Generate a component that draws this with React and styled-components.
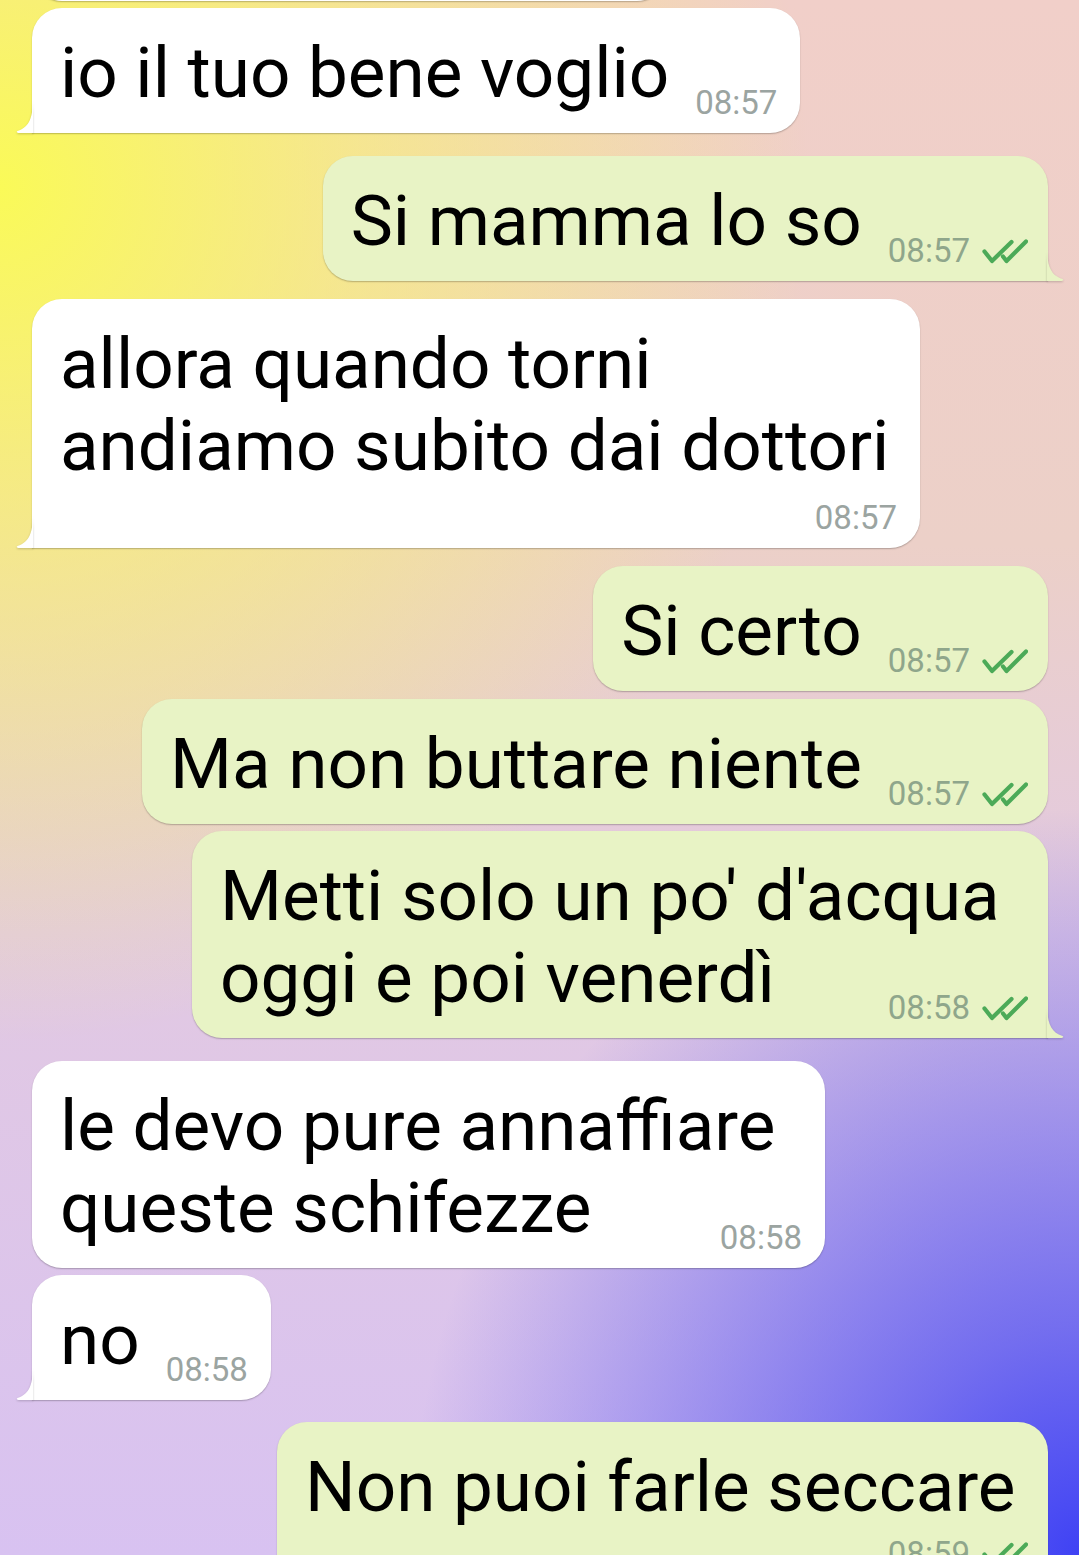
import React from "react";
import styled, { createGlobalStyle, css } from "styled-components";

const GlobalStyle = createGlobalStyle`
  html, body {
    margin: 0;
    padding: 0;
    height: 1555px;
    overflow: hidden;
  }
  body {
    font-family: Roboto, "Noto Sans", sans-serif;
  }
`;

const Screen = styled.main`
  width: 1079px;
  height: 1555px;
  overflow: hidden;
  background:
    radial-gradient(ellipse 75% 55% at 0% 12%, rgba(250, 250, 88, 1) 0%, rgba(250, 248, 100, 0.55) 45%, rgba(250, 248, 100, 0) 100%),
    radial-gradient(ellipse 62% 48% at 100% 100%, #3f42f4 0%, rgba(80, 80, 240, 0.75) 30%, rgba(120, 110, 235, 0) 100%),
    linear-gradient(180deg, #f1cfc9 0%, #ecd0c8 35%, #e2c9e2 60%, #d8c2f1 100%);
`;

const List = styled.div`
  display: flex;
  flex-direction: column;
`;

const Row = styled.div`
  display: flex;
  justify-content: ${({ $out }) => ($out ? "flex-end" : "flex-start")};
  padding: 0 31px 0 32px;
  margin-top: ${({ $mt }) => $mt}px;
`;

const Peek = styled.div`
  width: 635px;
  height: 40px;
  margin-top: -39px;
  background: #fff;
  border-radius: 0 0 30px 30px;
  box-shadow: 0 1px 1.5px rgba(0, 0, 0, 0.25);
`;

const Bubble = styled.div`
  position: relative;
  display: flow-root;
  box-sizing: border-box;
  min-width: ${({ $minWidth }) => ($minWidth ? `${$minWidth}px` : "0")};
  padding: 24px 23px 11px 28px;
  border-radius: 30px;
  background: ${({ $out }) => ($out ? "#e8f3c5" : "#ffffff")};
  box-shadow: 0 1px 1.5px rgba(0, 0, 0, 0.25);
  ${({ $out }) =>
    $out &&
    css`
      padding-right: 20px;
    `}
  ${({ $tail, $out }) =>
    $tail &&
    ($out
      ? css`
          border-bottom-right-radius: 0;
        `
      : css`
          border-bottom-left-radius: 0;
        `)}
`;

const Tail = styled.svg`
  position: absolute;
  bottom: 0;
  width: 17px;
  height: 36px;
  filter: drop-shadow(0 1px 0.8px rgba(0, 0, 0, 0.2));
  ${({ $out }) =>
    $out
      ? css`
          right: -16px;
          transform: scaleX(-1);
        `
      : css`
          left: -16px;
        `}
`;

const Text = styled.span`
  font-size: 71px;
  line-height: 82px;
  color: #000;
  white-space: nowrap;
`;

const Meta = styled.span`
  display: inline-flex;
  align-items: center;
  gap: 12px;
  font-size: 33px;
  line-height: 39px;
  color: ${({ $out }) => ($out ? "#8fa68b" : "#9ba4a1")};
  ${({ $stacked, $mt }) =>
    $stacked
      ? css`
          display: flex;
          justify-content: flex-end;
          margin-top: ${$mt ?? 11}px;
        `
      : css`
          float: right;
          margin: 51px 0 0 26px;
        `}
`;

const Ticks = () => (
  <svg width="46" height="26" viewBox="0 0 46 26" fill="none">
    <path
      d="M2.5 13.5 L10 23 L29.5 4 M21 18.5 L24.5 23 L44 3.5"
      stroke="#4caa58"
      strokeWidth="4.2"
      strokeLinecap="round"
      strokeLinejoin="round"
    />
  </svg>
);

const messages = [
  { out: false, mt: 7, lines: ["io il tuo bene voglio"], time: "08:57", tail: true },
  { out: true, mt: 23, lines: ["Si mamma lo so"], time: "08:57", tail: true },
  {
    out: false,
    mt: 18,
    lines: ["allora quando torni", "andiamo subito dai dottori"],
    time: "08:57",
    tail: true,
    stacked: true,
    minWidth: 888,
  },
  { out: true, mt: 18, lines: ["Si certo"], time: "08:57" },
  { out: true, mt: 8, lines: ["Ma non buttare niente"], time: "08:57" },
  {
    out: true,
    mt: 7,
    lines: ["Metti solo un po' d'acqua", "oggi e poi venerdì"],
    time: "08:58",
    tail: true,
    minWidth: 856,
  },
  {
    out: false,
    mt: 23,
    lines: ["le devo pure annaffiare", "queste schifezze"],
    time: "08:58",
    minWidth: 793,
  },
  { out: false, mt: 7, lines: ["no"], time: "08:58", tail: true },
  {
    out: true,
    mt: 22,
    lines: ["Non puoi farle seccare"],
    time: "08:59",
    stacked: true,
    metaMt: 6,
    minWidth: 771,
  },
];

const Message = ({ out, mt, lines, time, tail, stacked, metaMt, minWidth }) => (
  <Row $out={out} $mt={mt}>
    <Bubble $out={out} $tail={tail} $minWidth={minWidth}>
      {tail && (
        <Tail $out={out} viewBox="0 0 17 36">
          <path
            d="M17 0 C17 20 14 30 1.5 34 Q -0.5 35.4 2.5 36 L17 36 Z"
            fill={out ? "#e8f3c5" : "#ffffff"}
          />
        </Tail>
      )}
      <Text>
        {lines.map((line, i) => (
          <React.Fragment key={i}>
            {i > 0 && <br />}
            {line}
          </React.Fragment>
        ))}
      </Text>
      <Meta $out={out} $stacked={stacked} $mt={metaMt}>
        {time}
        {out && <Ticks />}
      </Meta>
    </Bubble>
  </Row>
);

export default function App() {
  return (
    <>
      <GlobalStyle />
      <Screen>
        <List>
          <Row $mt={0}>
            <Peek />
          </Row>
          {messages.map((m, i) => (
            <Message key={i} {...m} />
          ))}
        </List>
      </Screen>
    </>
  );
}
